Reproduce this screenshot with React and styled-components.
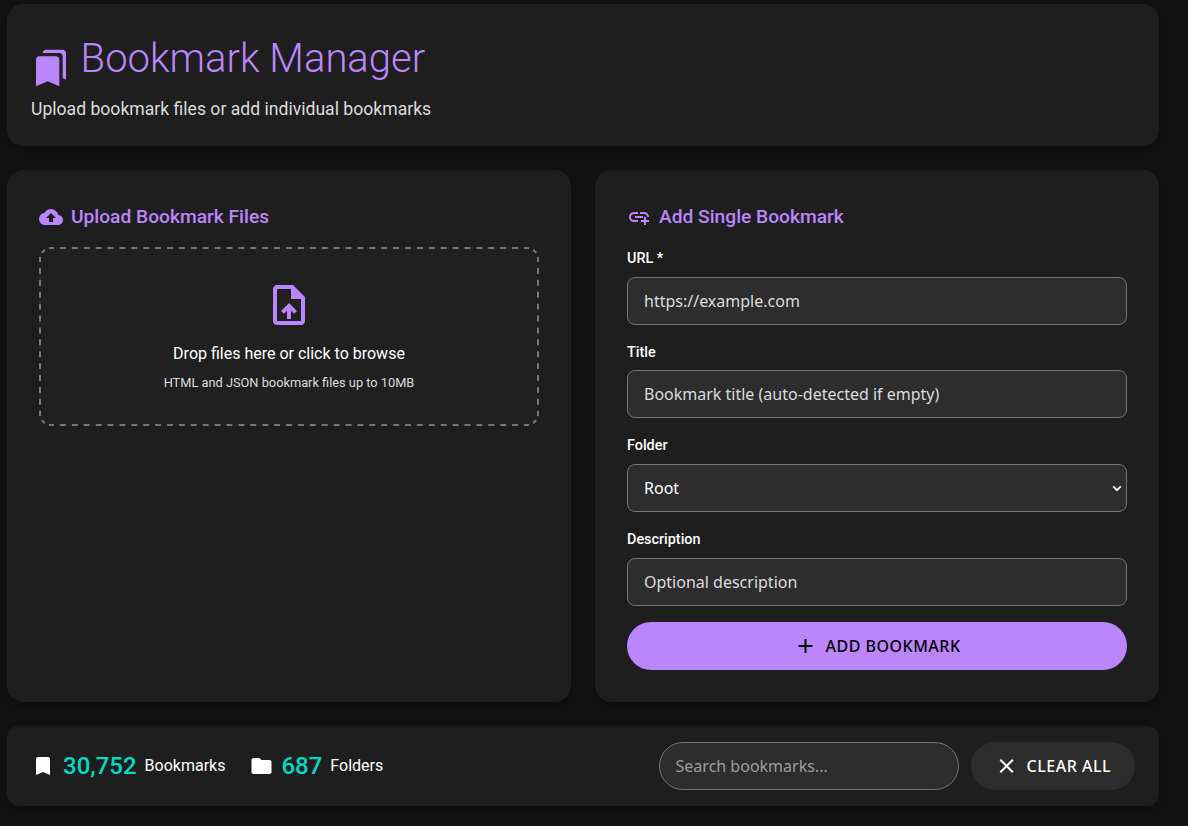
import React from "react";
import styled, { createGlobalStyle, css } from "styled-components";
import {
  MdBookmarks,
  MdCloudUpload,
  MdUploadFile,
  MdAddLink,
  MdAdd,
  MdClose,
  MdBookmark,
  MdFolder,
} from "react-icons/md";

const color = {
  page: "#121212",
  surface: "#1e1e1e",
  field: "#2d2d2d",
  dropZone: "#202020",
  outline: "#79747e",
  fieldBorder: "#757575",
  primary: "#bb86fc",
  accent: "#03dac6",
  text: "#ffffff",
  muted: "#dcdcdc",
};

const GlobalStyle = createGlobalStyle`
  *, *::before, *::after { box-sizing: border-box; }
  html { background: ${color.page}; overflow: hidden; }
  body {
    margin: 0;
    color: ${color.text};
    font-family: Roboto, sans-serif;
    font-size: 16px;
    line-height: 1.5;
  }
  h1, h2, p { margin: 0; }
  svg { display: block; flex: none; }
`;

const Page = styled.main`
  display: flex;
  flex-direction: column;
  gap: 24px;
  width: 1159px;
  padding: 3.6px 0 20px 7px;
`;

const surface = css`
  background: ${color.surface};
  box-shadow: 0 4px 8px rgba(0, 0, 0, 0.3);
`;

const Header = styled.header`
  ${surface}
  height: 142px;
  padding: 24px;
  border-radius: 16px;
`;

const Brand = styled.h1`
  display: flex;
  align-items: flex-start;
  gap: 9.6px;
  height: 68px;
  color: ${color.primary};
  font-size: 40px;
  font-weight: 300;
  line-height: 62px;

  svg { margin-top: 20.4px; }
`;

const Tagline = styled.p`
  color: ${color.muted};
  font-size: 17.6px;
  line-height: 26.4px;
`;

const Columns = styled.div`
  display: grid;
  grid-template-columns: 1fr 1fr;
  gap: 24px;
`;

const Card = styled.section`
  ${surface}
  padding: 32px;
  border-radius: 16px;
`;

const CardTitle = styled.h2`
  display: flex;
  align-items: center;
  gap: 8px;
  height: 29.6px;
  margin-bottom: 16px;
  padding-top: 1.4px;
  color: ${color.primary};
  font-size: 19.2px;
  font-weight: 500;
`;

const DropZone = styled.div`
  position: relative;
  display: flex;
  flex-direction: column;
  align-items: center;
  height: 178.6px;
  padding: 34px;
  border-radius: 12px;
  background: ${color.dropZone};
  text-align: center;
`;

const DropIcon = styled(MdUploadFile)`
  color: ${color.primary};
`;

const DashedOutline = styled.svg`
  position: absolute;
  top: 0;
  left: 0;
  fill: none;
  stroke: ${color.outline};
  stroke-width: 2px;
`;

const DropText = styled.p`
  margin-top: 12.4px;
`;

const DropHint = styled.p`
  margin-top: 7.2px;
  color: ${color.muted};
  font-size: 12.8px;
`;

const Field = styled.label`
  display: flex;
  flex-direction: column;
  gap: 7.2px;
  margin-bottom: 16px;
`;

const FieldLabel = styled.span`
  padding-top: 0.8px;
  font-size: 14.4px;
  font-weight: 500;
  line-height: 21.6px;
`;

const control = css`
  width: 100%;
  height: 48px;
  padding: 0 16px;
  border: 1px solid ${color.fieldBorder};
  background: ${color.field};
  color: ${color.text};
  font-family: "Noto Sans", sans-serif;
  font-size: 16px;
  outline: none;
`;

const TextInput = styled.input`
  ${control}
  border-radius: 8px;

  &::placeholder { color: ${color.muted}; opacity: 1; }
`;

const SelectWrap = styled.div`
  position: relative;
  height: 48px;
`;

const Select = styled.select`
  ${control}
  appearance: none;
  border-radius: 8px;
`;

const Chevron = styled.svg`
  position: absolute;
  top: 21px;
  right: 5px;
  fill: none;
  stroke: ${color.text};
  stroke-width: 1.7px;
  pointer-events: none;
`;

const SearchInput = styled.input`
  ${control}
  width: 300px;
  border-radius: 24px;

  &::placeholder { color: #9e9e9e; opacity: 1; }
`;

const Button = styled.button`
  display: flex;
  align-items: center;
  justify-content: center;
  gap: 8px;
  width: ${(p) => (p.$block ? "100%" : "auto")};
  height: 48px;
  padding: 0 24px;
  border: 0;
  border-radius: 24px;
  background: ${(p) => (p.$primary ? color.primary : color.field)};
  color: ${(p) => (p.$primary ? "#000000" : color.text)};
  font-family: "Noto Sans", sans-serif;
  font-size: 16px;
  font-weight: 500;
  letter-spacing: 0.5px;
  text-transform: uppercase;

  svg { transform: translateX(${(p) => (p.$primary ? 0.5 : -0.4)}px); }
`;

const Toolbar = styled.footer`
  ${surface}
  display: flex;
  align-items: center;
  justify-content: space-between;
  height: 80px;
  padding: 16px 24px;
  border-radius: 12px;
`;

const Group = styled.div`
  display: flex;
  align-items: center;
  gap: ${(p) => p.$gap}px;
`;

const FolderIcon = styled(MdFolder)`
  transform: translateX(0.5px);
`;

const Count = styled.strong`
  color: ${color.accent};
  font-size: 24px;
  font-weight: 500;
`;

function Stat({ icon, count, label }) {
  return (
    <Group $gap={8}>
      {icon}
      <Count>{count}</Count>
      <span>{label}</span>
    </Group>
  );
}

// Dashes are centred on each straight edge's ends, with shorter dashes round the corners.
function DashedBorder() {
  const w = 500;
  const h = 179;
  const r = 12;
  return (
    <DashedOutline width={w} height={h} aria-hidden="true">
      <path
        strokeDasharray="5.95"
        strokeDashoffset="2.975"
        d={`M${r} 1H${w - r}M${r} ${h - 1}H${w - r}M1 ${r}V${h - r}M${w - 1} ${r}V${h - r}`}
      />
      <path
        strokeDasharray="4.32"
        strokeDashoffset="2.16"
        d={`M1 ${r}A11 11 0 0 1 ${r} 1M${w - r} 1A11 11 0 0 1 ${w - 1} ${r}M${w - 1} ${h - r}A11 11 0 0 1 ${w - r} ${h - 1}M${r} ${h - 1}A11 11 0 0 1 1 ${h - r}`}
      />
    </DashedOutline>
  );
}

export default function App() {
  return (
    <>
      <GlobalStyle />
      <Page>
        <Header>
          <Brand>
            <MdBookmarks size={40} />
            Bookmark Manager
          </Brand>
          <Tagline>Upload bookmark files or add individual bookmarks</Tagline>
        </Header>

        <Columns>
          <Card>
            <CardTitle>
              <MdCloudUpload size={24} />
              Upload Bookmark Files
            </CardTitle>
            <DropZone>
              <DashedBorder />
              <DropIcon size={48} />
              <DropText>Drop files here or click to browse</DropText>
              <DropHint>HTML and JSON bookmark files up to 10MB</DropHint>
            </DropZone>
          </Card>

          <Card>
            <CardTitle>
              <MdAddLink size={24} />
              Add Single Bookmark
            </CardTitle>
            <Field>
              <FieldLabel>URL *</FieldLabel>
              <TextInput placeholder="https://example.com" />
            </Field>
            <Field>
              <FieldLabel>Title</FieldLabel>
              <TextInput placeholder="Bookmark title (auto-detected if empty)" />
            </Field>
            <Field>
              <FieldLabel>Folder</FieldLabel>
              <SelectWrap>
                <Select defaultValue="root">
                  <option value="root">Root</option>
                </Select>
                <Chevron width="10" height="7" viewBox="0 0 10 7" aria-hidden="true">
                  <path d="M1.2 1.4L5 5.2L8.8 1.4" />
                </Chevron>
              </SelectWrap>
            </Field>
            <Field>
              <FieldLabel>Description</FieldLabel>
              <TextInput placeholder="Optional description" />
            </Field>
            <Button $primary $block>
              <MdAdd size={24} />
              Add Bookmark
            </Button>
          </Card>
        </Columns>

        <Toolbar>
          <Group $gap={24}>
            <Stat icon={<MdBookmark size={24} />} count="30,752" label="Bookmarks" />
            <Stat icon={<FolderIcon size={24} />} count="687" label="Folders" />
          </Group>
          <Group $gap={12}>
            <SearchInput placeholder="Search bookmarks..." />
            <Button>
              <MdClose size={24} />
              Clear All
            </Button>
          </Group>
        </Toolbar>
      </Page>
    </>
  );
}
